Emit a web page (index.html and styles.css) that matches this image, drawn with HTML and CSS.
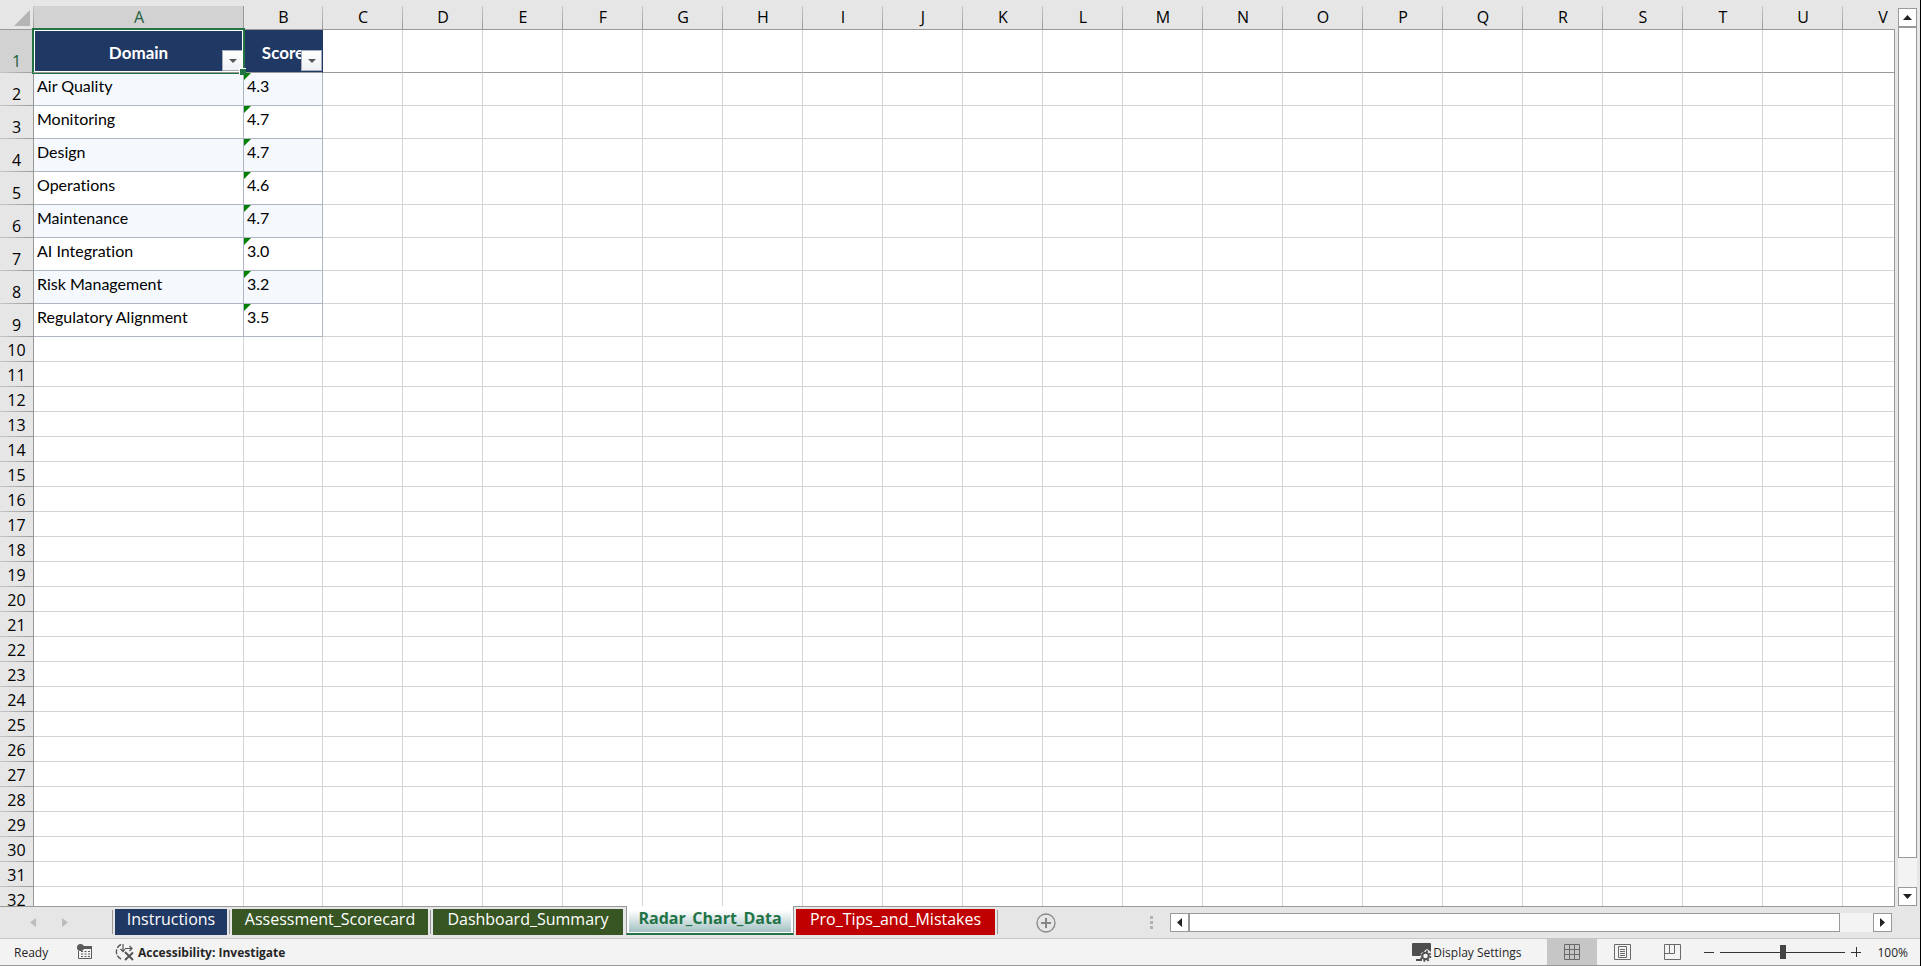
FILE: index.html
```html
<!DOCTYPE html>
<html lang="en">
<head>
<meta charset="utf-8">
<title>Radar_Chart_Data</title>
<link rel="stylesheet" href="styles.css">
</head>
<body>
<div class="app">
  <main class="workspace">
    <div class="grid">
      <table class="sheet" id="sheet">
        <colgroup id="cols"></colgroup>
        <thead><tr id="letters"></tr></thead>
        <tbody id="rows"></tbody>
      </table>
    </div>
    <div class="vscroll">
      <button class="arrow" aria-label="Scroll up"><svg width="9" height="5"><path d="M0 5 4.500 0 9 5z"/></svg></button>
      <div class="vtrack"><div class="vthumb"></div></div>
      <button class="arrow" aria-label="Scroll down"><svg width="9" height="5"><path d="M0 0H9L4.500 5z"/></svg></button>
    </div>
  </main>

  <nav class="tabbar" aria-label="Sheets">
    <div class="tabnav">
      <button class="plain" aria-label="Previous sheet" disabled><svg width="6" height="9"><path d="M6 0V9L0 4.500z"/></svg></button>
      <button class="plain" aria-label="Next sheet" disabled><svg width="6" height="9"><path d="M0 0V9L6 4.500z"/></svg></button>
    </div>
    <div class="tabs">
      <button class="tab navy w-s">Instructions</button>
      <button class="tab green w-l">Assessment_Scorecard</button>
      <button class="tab green w-m">Dashboard_Summary</button>
      <button class="tab active" aria-current="page"><span>Radar_Chart_Data</span></button>
      <button class="tab red w-xl">Pro_Tips_and_Mistakes</button>
    </div>
    <button class="plain add" aria-label="New sheet">
      <svg width="20" height="20" fill="none" stroke="#868686"><circle cx="10" cy="10" r="9" stroke-width="1.300"/><path d="M5 10H15M10 5V15" stroke-width="2"/></svg>
    </button>
    <div class="spacer"></div>
    <div class="dots"><i></i><i></i><i></i></div>
    <div class="hscroll">
      <button class="arrow" aria-label="Scroll left"><svg width="5" height="9"><path d="M5 0V9L0 4.500z"/></svg></button>
      <div class="htrack"><div class="hthumb"></div></div>
      <button class="arrow" aria-label="Scroll right"><svg width="5" height="9"><path d="M0 0V9L5 4.500z"/></svg></button>
    </div>
  </nav>

  <footer class="status">
    <span class="ready">Ready</span>
    <button class="plain macro" aria-label="Record macro">
      <svg width="16" height="16"><path d="M5 2H15V5H5z" fill="#5a5a5a"/><path d="M1.500 7V14.500H14.500V3" fill="none" stroke="#5a5a5a"/><path d="M4 7.500H13M4 10H13M4 12.500H13" stroke="#5a5a5a" stroke-dasharray="2 1.500"/><circle cx="3.500" cy="3.500" r="3.500" fill="#5a5a5a"/></svg>
    </button>
    <button class="plain access">
      <svg width="20" height="18" fill="none" stroke="#555"><path d="M6 1.500A8 8 0 0 0 6 16" stroke-width="1.400" stroke-dasharray="5 1.500"/><path d="M8 1V8M5.500 6 8 8.500 10 6M10 5.500H17M14.500 3 17 5.500 14.500 8" stroke-width="1.200"/><path d="M10 9 18 17M18 9.500 10 17" stroke-width="2"/></svg>
      <span>Accessibility: Investigate</span>
    </button>
    <div class="spacer"></div>
    <button class="plain display">
      <svg width="20" height="19"><path d="M1 0H18Q19 0 19 1V9L15 6 8 11V13H1Q0 13 0 12V1Q0 0 1 0z" fill="#4f4f4f"/><path d="M4 17H10" stroke="#4f4f4f" stroke-width="2"/><circle cx="13.500" cy="13" r="3.300" fill="#f3f3f3" stroke="#4f4f4f" stroke-width="2"/><circle cx="13.500" cy="13" r="5" fill="none" stroke="#4f4f4f" stroke-width="1.500" stroke-dasharray="2 1.930"/></svg>
      <span>Display Settings</span>
    </button>
    <div class="views">
      <button class="view on" aria-label="Normal"><svg width="16" height="16" fill="none" stroke="#6a6a6a"><path d="M.5.5H15.500V15.500H.5zM5.500 0V16M10.500 0V16M0 5.500H16M0 10.500H16"/></svg></button>
      <button class="view" aria-label="Page layout"><svg width="17" height="16" fill="none" stroke="#6a6a6a"><path d="M.5.5H16.500V15.500H.5zM4.500 2.500H12.500V13.500H4.500zM6 5.500H11M6 7.500H11M6 9.500H11M6 11.500H11"/></svg></button>
      <button class="view" aria-label="Page break preview"><svg width="17" height="16" fill="none" stroke="#6a6a6a"><path d="M.5.5H16.500V15.500H.5zM.5 9.500H10.500V.5M5.500 .5V9.500"/></svg></button>
    </div>
    <button class="plain step" aria-label="Zoom out"><svg width="10" height="10"><path d="M0 5.500H10" stroke="#333"/></svg></button>
    <input class="zoom" type="range" min="0" max="100" value="50" aria-label="Zoom">
    <button class="plain step" aria-label="Zoom in"><svg width="10" height="10"><path d="M0 5.500H10M5.500 0V10" stroke="#333"/></svg></button>
    <button class="plain percent">100%</button>
  </footer>
</div>
<script src="sheet.js"></script>
</body>
</html>
```
FILE: styles.css
```css
* { box-sizing: border-box; }
body { margin: 0; font-family: "Open Sans", "Noto Sans", sans-serif; color: #000; }
button { font: inherit; color: inherit; margin: 0; padding: 0; cursor: default; }
svg { display: block; flex: none; }
.spacer { flex: 1; }
.plain { border: 0; background: none; display: flex; align-items: center; }

.app { display: flex; flex-direction: column; height: 100vh; overflow: hidden; background: #e6e6e6; border-right: 1px solid #000; }
.workspace { flex: 1; min-height: 0; display: flex; }
.grid { flex: 1; min-width: 0; position: relative; overflow: hidden; border-bottom: 1px solid #999; }
.grid::after { content: ""; position: absolute; top: 29px; right: 0; bottom: 0; width: 1px; background: #999; }

.sheet { table-layout: fixed; width: 0; border-collapse: separate; border-spacing: 0; }
.c-head { width: 34px; }
.c-a { width: 210px; }
.c-b { width: 79px; }
.c-n { width: 80px; }
.sheet th, .sheet td { padding: 0; }
.sheet thead th { height: 30px; border-bottom: 1px solid #999; font-weight: 400; font-size: 16px; line-height: 24px; vertical-align: bottom;
  background: linear-gradient(#c6c6c6, #999) right bottom / 1px 23px no-repeat #e6e6e6; }
.sheet thead th.on { color: #1e5f3e; background: linear-gradient(#999, #999) right bottom / 1px 23px no-repeat, linear-gradient(#d2d2d2, #d2d2d2) left bottom / 100% 23px no-repeat; }
.corner svg { margin: 0 0 3px 14px; }

.rowhead { height: 25px; border-right: 1px solid #999; font-weight: 400; font-size: 16px; line-height: 24px; vertical-align: bottom;
  background: linear-gradient(90deg, #c6c6c6, #999) left bottom / 100% 1px no-repeat #e6e6e6; }
th.rowhead.on { color: #1e5f3e; background-color: #d2d2d2; }
.sheet td { background: #fff; border-right: 1px solid #d4d4d4; border-bottom: 1px solid #d4d4d4; }
.data .rowhead { height: 33px; }
.sheet td.item { position: relative; padding: 1px 3px 0; border-color: #adb6c2; vertical-align: top; font: 16px/24px Lato, "Open Sans", sans-serif; font-variant-ligatures: none; white-space: nowrap; }
.data:nth-child(even) .item { background: #f5f9fe; }
.flag { position: absolute; left: 0; top: 0; }
.title .rowhead { height: 43px; }
.sheet .title td { border-bottom-color: #999; }
.sheet td.head { position: relative; background: #203864; color: #fff; text-align: center; font: 700 17px/24px Lato, "Open Sans", sans-serif; padding-top: 3px; border-right-color: #203864; }
.filter { position: absolute; right: 0; bottom: 1px; width: 21px; height: 21px; border: 1px solid #a6adb8; background: linear-gradient(#fff, #eef0f4); display: flex; align-items: center; justify-content: center; }
.selection { position: absolute; z-index: 2; left: -2px; top: -2px; right: -2px; bottom: -2px; border: 2px solid #217346; box-shadow: inset 0 0 0 1px #fff; pointer-events: none; }
.selection::before { content: ""; position: absolute; left: -1px; right: 0; bottom: -1px; height: 1px; background: #999; }
.selection::after { content: ""; position: absolute; right: -3px; bottom: -3px; width: 6px; height: 6px; background: #217346; border: solid #fff; border-width: 1px 0 0 1px; }

.arrow { flex: none; width: 19px; height: 19px; border: 1px solid #999; background: #fff; display: flex; align-items: center; justify-content: center; fill: #222; }
.vscroll { width: 25px; padding: 8px 3px 1px; display: flex; flex-direction: column; align-items: center; }
.vtrack { flex: 1; width: 19px; background: #f3f3f3; padding-bottom: 29px; display: flex; }
.vthumb { flex: 1; background: #fff; border: 1px solid #999; }

.tabbar { height: 32px; display: flex; align-items: center; border-bottom: 1px solid #c6c6c6; font-size: 16px; }
.tabnav { width: 112px; padding-left: 30px; display: flex; gap: 26px; fill: #bcbcbc; }
.tabs { align-self: flex-start; display: flex; align-items: flex-start; }
.tab { position: relative; height: 26px; margin: 2px 3px 0; border: 0; color: #fff; line-height: 20px; padding-bottom: 6px; white-space: nowrap; }
.tab::before { content: ""; position: absolute; left: -3px; top: 1px; width: 1px; height: 24px; background: #999; }
.tab + .tab { margin-left: 2px; }
.w-s { width: 112px; }
.w-m { width: 190px; }
.w-l { width: 196px; }
.w-xl { width: 199px; }
.navy { background: #203864; }
.green { background: #375623; }
.red { background: #c00000; }
.tabs .active { z-index: 1; width: 168px; height: 29px; margin: -1px 0 0 0; padding: 2px 2px 1px; background: #fff; color: #217346; font-weight: 700; border: solid #999; border-width: 0 1px; border-bottom: 2px solid #217346; }
.active::before { display: none; }
.active span { display: block; height: 24px; line-height: 20px; background: linear-gradient(#fff 10%, #a4c1c3); }
.tab.red::before { left: auto; right: -3px; }
.add { margin-left: 38px; }
.dots { display: flex; flex-direction: column; gap: 2px; margin-right: 17px; }
.dots i { width: 3px; height: 3px; background: #b0b0b0; }
.hscroll { flex: 0 1 722px; margin-right: 28px; display: flex; }
.htrack { flex: 1; background: #f3f3f3; padding-right: 33px; display: flex; }
.hthumb { flex: 1; background: #fff; border: 1px solid #999; }

.status { height: 27px; display: flex; align-items: center; background: #f3f3f3; border-bottom: 1px solid #999; font-size: 12px; color: #262626; white-space: nowrap; }
.ready { width: 77px; padding-left: 14px; }
.macro { width: 38px; }
.access { gap: 3px; font-weight: 700; }
.views { display: flex; align-self: stretch; }
.view { width: 50px; border: 0; background: none; display: flex; align-items: center; justify-content: center; }
.view.on { background: #c6c6c6; }
.display { gap: 1px; margin-right: 26px; }
.step { width: 10px; height: 20px; }
.views + .step { margin-left: 7px; }
.zoom { appearance: none; width: 125px; height: 16px; margin: 0 6px; background: linear-gradient(#333, #333) center / 100% 1px no-repeat; }
.zoom::-webkit-slider-thumb { appearance: none; width: 6px; height: 14px; background: #444; }
.percent { margin: 0 12px 0 16px; }
```
FILE: sheet.js
```js
const letters = "ABCDEFGHIJKLMNOPQRSTUV".split("");
const data = [
  ["Air Quality", "4.3"],
  ["Monitoring", "4.7"],
  ["Design", "4.7"],
  ["Operations", "4.6"],
  ["Maintenance", "4.7"],
  ["AI Integration", "3.0"],
  ["Risk Management", "3.2"],
  ["Regulatory Alignment", "3.5"]
];
const rowCount = 32;
const filter = (name) =>
  `<button class="filter" aria-label="Filter ${name}"><svg width="8" height="4"><path d="M0 0H8L4 4z" fill="#555"/></svg></button>`;
const flag = '<svg class="flag" width="7" height="7"><path d="M0 0H7L0 7z" fill="#008000"/></svg>';

document.getElementById("cols").innerHTML =
  '<col class="c-head"><col class="c-a"><col class="c-b">' + '<col class="c-n">'.repeat(letters.length - 2);

document.getElementById("letters").innerHTML =
  '<th class="corner"><svg width="16" height="16"><path d="M16 0V16H0z" fill="#b4b4b4"/></svg></th>' +
  letters.map((l) => `<th scope="col"${l === "A" ? ' class="on"' : ""}>${l}</th>`).join("");

const empty = "<td></td>".repeat(letters.length - 2);
let html = `<tr class="title"><th class="rowhead on" scope="row">1</th>
  <td class="head">Domain${filter("Domain")}<div class="selection"></div></td>
  <td class="head">Score${filter("Score")}</td>${empty}</tr>`;
for (let n = 2; n <= rowCount; n++) {
  const item = data[n - 2];
  html += item
    ? `<tr class="data"><th class="rowhead" scope="row">${n}</th><td class="item">${item[0]}</td><td class="item">${flag}${item[1]}</td>${empty}</tr>`
    : `<tr><th class="rowhead" scope="row">${n}</th><td></td><td></td>${empty}</tr>`;
}
document.getElementById("rows").innerHTML = html;
```
